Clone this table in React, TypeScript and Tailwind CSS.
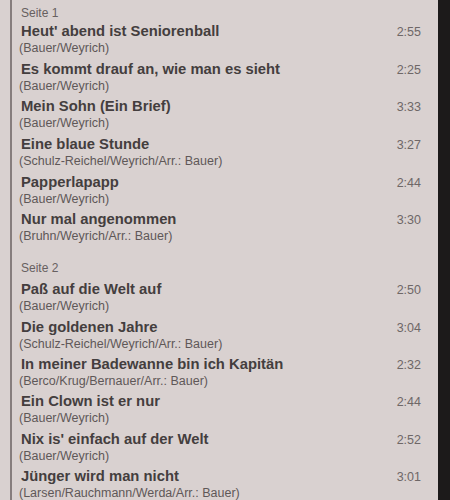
import React from "react";

type Track = { title: string; credit: string; time: string };

const side1: Track[] = [
  { title: "Heut' abend ist Seniorenball", credit: "(Bauer/Weyrich)", time: "2:55" },
  { title: "Es kommt drauf an, wie man es sieht", credit: "(Bauer/Weyrich)", time: "2:25" },
  { title: "Mein Sohn (Ein Brief)", credit: "(Bauer/Weyrich)", time: "3:33" },
  { title: "Eine blaue Stunde", credit: "(Schulz-Reichel/Weyrich/Arr.: Bauer)", time: "3:27" },
  { title: "Papperlapapp", credit: "(Bauer/Weyrich)", time: "2:44" },
  { title: "Nur mal angenommen", credit: "(Bruhn/Weyrich/Arr.: Bauer)", time: "3:30" },
];

const side2: Track[] = [
  { title: "Paß auf die Welt auf", credit: "(Bauer/Weyrich)", time: "2:50" },
  { title: "Die goldenen Jahre", credit: "(Schulz-Reichel/Weyrich/Arr.: Bauer)", time: "3:04" },
  { title: "In meiner Badewanne bin ich Kapitän", credit: "(Berco/Krug/Bernauer/Arr.: Bauer)", time: "2:32" },
  { title: "Ein Clown ist er nur", credit: "(Bauer/Weyrich)", time: "2:44" },
  { title: "Nix is' einfach auf der Welt", credit: "(Bauer/Weyrich)", time: "2:52" },
  { title: "Jünger wird man nicht", credit: "(Larsen/Rauchmann/Werda/Arr.: Bauer)", time: "3:01" },
];

function TrackRow({ t, tall }: { t: Track; tall: boolean }) {
  return (
    <div className={tall ? "flex flex-col h-[37.7px] shrink-0" : "flex flex-col h-[37.4px] shrink-0"}>
      <div className="flex items-baseline justify-between">
        <span className="text-[14.8px] leading-[18px] font-bold text-[#443e3e] pl-[2px]">{t.title}</span>
        <span className="text-[12.5px] leading-[18px] text-[#6e6767]">{t.time}</span>
      </div>
      <div className="text-[12.5px] leading-[14px] text-[#5f5858]">{t.credit}</div>
    </div>
  );
}

export default function App() {
  return (
    <div
      className="w-[450px] h-[500px] flex bg-[#d9d1d0] overflow-hidden"
      style={{ fontFamily: '"Liberation Sans", Arial, sans-serif' }}
    >
      <div className="ml-[10px] w-[2px] bg-[#867d7d]" />
      <div className="flex-1 flex flex-col pl-[7px] pr-[17px] pt-[5px]">
        <div className="text-[12px] leading-[16px] text-[#676060] pl-[2px] mb-[1px]">Seite 1</div>
        {side1.map((t) => (
          <TrackRow key={t.title} t={t} tall />
        ))}
        <div className="text-[12px] leading-[16px] text-[#676060] pl-[2px] mt-[12px] mb-[4px]">Seite 2</div>
        {side2.map((t) => (
          <TrackRow key={t.title} t={t} tall={false} />
        ))}
      </div>
      <div className="w-[12px] bg-[#1c1a1a]" />
    </div>
  );
}
